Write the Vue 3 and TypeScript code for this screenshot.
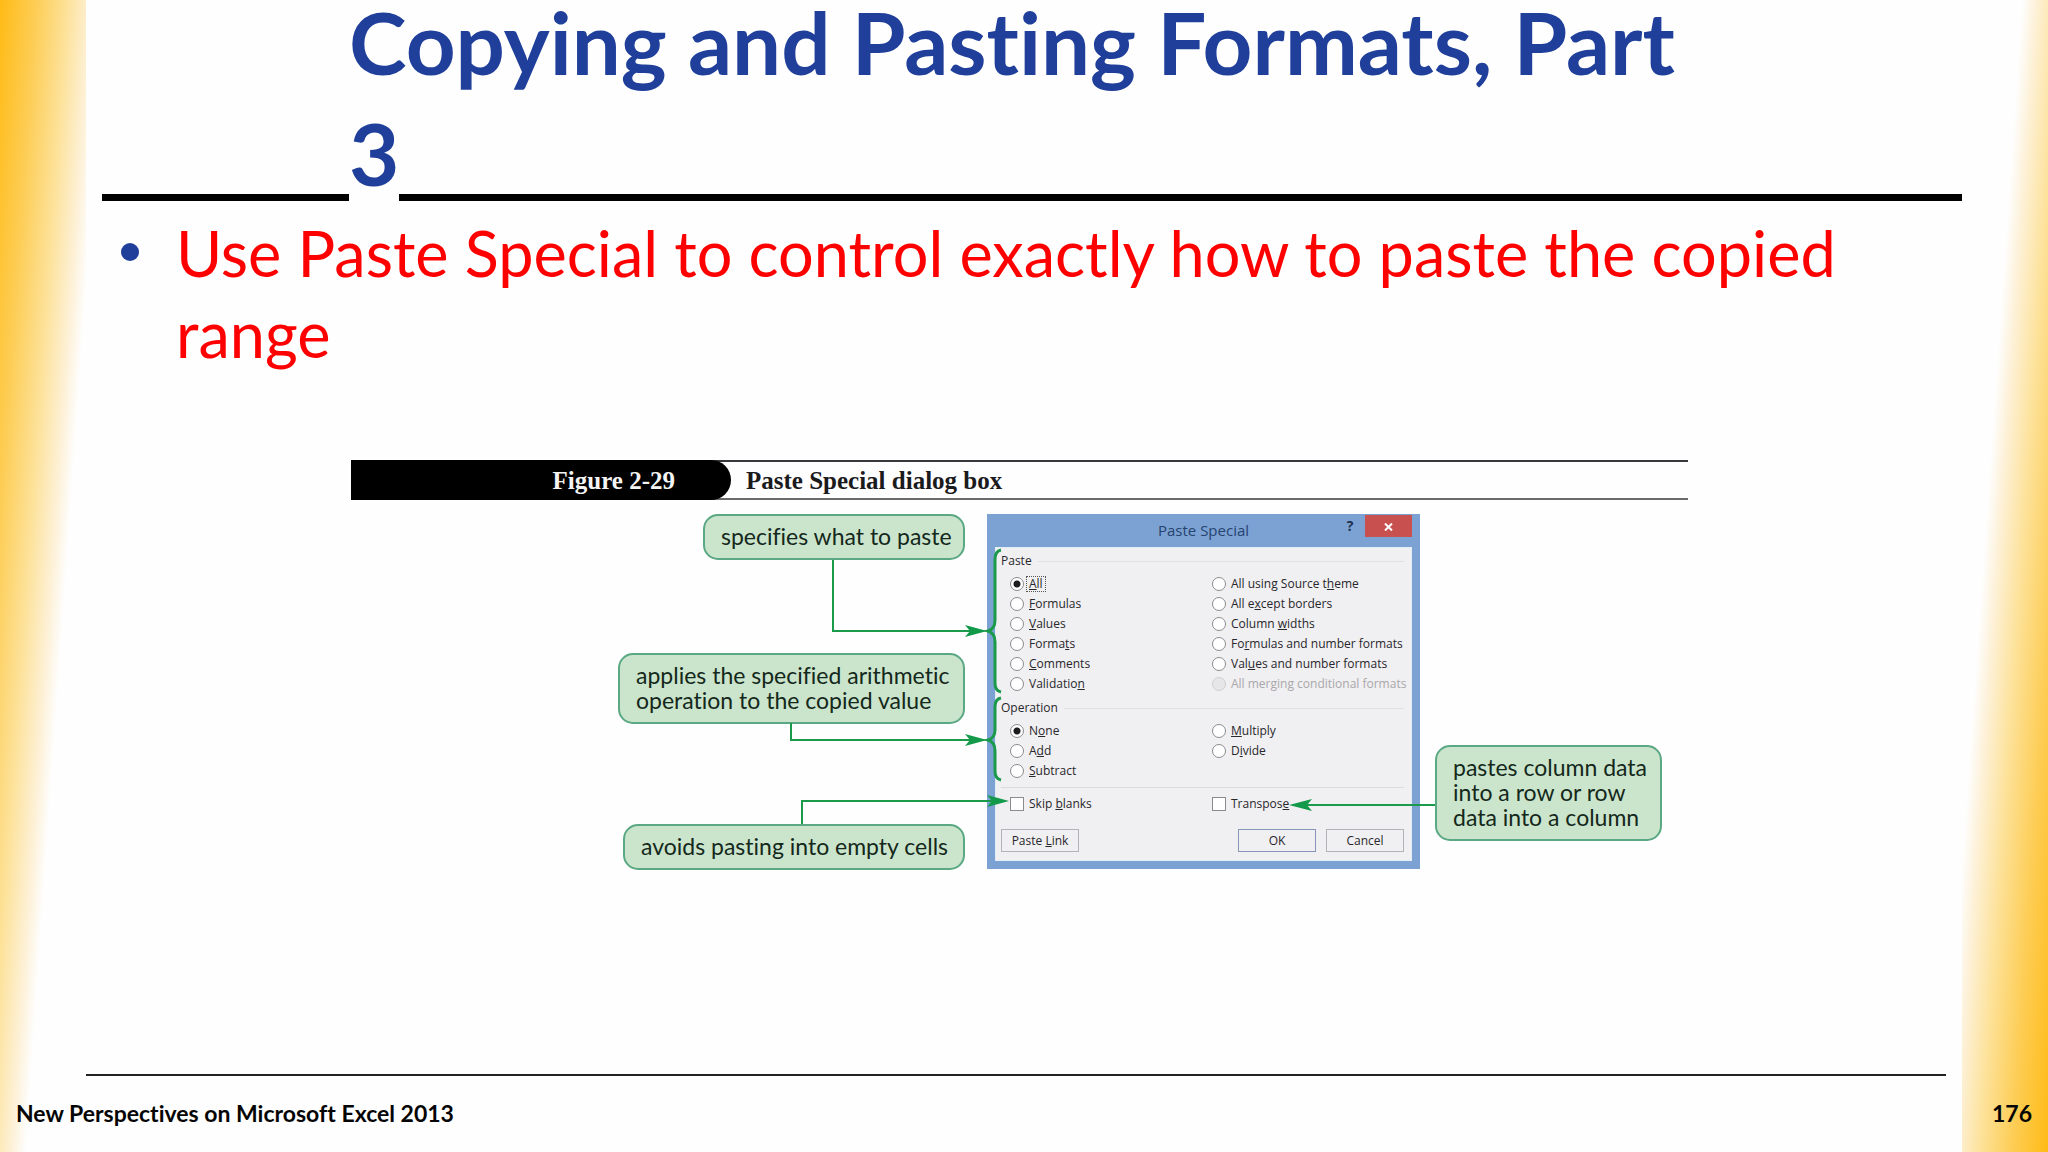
<script setup lang="ts">
import { ref } from 'vue'

interface Option {
  id: string
  before: string
  key: string
  after: string
  disabled?: boolean
}

const pasteOptions: Option[] = [
  { id: 'all', before: '', key: 'A', after: 'll' },
  { id: 'formulas', before: '', key: 'F', after: 'ormulas' },
  { id: 'values', before: '', key: 'V', after: 'alues' },
  { id: 'formats', before: 'Forma', key: 't', after: 's' },
  { id: 'comments', before: '', key: 'C', after: 'omments' },
  { id: 'validation', before: 'Validatio', key: 'n', after: '' },
  { id: 'theme', before: 'All using Source t', key: 'h', after: 'eme' },
  { id: 'borders', before: 'All e', key: 'x', after: 'cept borders' },
  { id: 'widths', before: 'Column ', key: 'w', after: 'idths' },
  { id: 'formulas-numbers', before: 'Fo', key: 'r', after: 'mulas and number formats' },
  { id: 'values-numbers', before: 'Val', key: 'u', after: 'es and number formats' },
  { id: 'merging', before: 'All mer', key: 'g', after: 'ing conditional formats', disabled: true },
]

const operationOptions: Option[] = [
  { id: 'none', before: 'N', key: 'o', after: 'ne' },
  { id: 'add', before: 'A', key: 'd', after: 'd' },
  { id: 'subtract', before: '', key: 'S', after: 'ubtract' },
  { id: 'multiply', before: '', key: 'M', after: 'ultiply' },
  { id: 'divide', before: 'D', key: 'i', after: 'vide' },
]

const toggles: Option[] = [
  { id: 'skip', before: 'Skip ', key: 'b', after: 'lanks' },
  { id: 'transpose', before: 'Transpos', key: 'e', after: '' },
]

const paste = ref('all')
const operation = ref('none')
const checked = ref<string[]>([])
</script>

<template>
  <main class="slide">
    <header class="head">
      <h1><span>Copying and Pasting Formats, Part 3</span></h1>
    </header>

    <ul class="points">
      <li>Use Paste Special to control exactly how to paste the copied range</li>
    </ul>

    <figure class="figure">
      <figcaption class="caption">
        <span class="number">Figure 2-29</span>
        <span class="name">Paste Special dialog box</span>
      </figcaption>

      <div class="diagram">
        <div class="notes">
          <p class="note note-paste">specifies what to paste</p>
          <p class="note note-operation">applies the specified arithmetic<br />operation to the copied value</p>
          <p class="note note-blanks">avoids pasting into empty cells</p>
        </div>

        <form class="dialog" @submit.prevent>
          <div class="titlebar">
            <h2>Paste Special</h2>
            <button type="button" class="help" aria-label="Help">?</button>
            <button type="button" class="close" aria-label="Close">
              <svg width="9" height="8" viewBox="0 0 9 8">
                <path d="M1 0.5 8 7.5M8 0.5 1 7.5" stroke="#fff" stroke-width="2" fill="none" />
              </svg>
            </button>
          </div>

          <div class="panel">
            <fieldset>
              <legend>Paste</legend>
              <div class="options six">
                <label v-for="o in pasteOptions" :key="o.id" :class="{ off: o.disabled }">
                  <input v-model="paste" type="radio" name="paste" :value="o.id" :disabled="o.disabled" />
                  <span :class="{ focused: paste === o.id }">{{ o.before }}<u>{{ o.key }}</u>{{ o.after }}</span>
                </label>
              </div>
            </fieldset>

            <fieldset class="second">
              <legend>Operation</legend>
              <div class="options three">
                <label v-for="o in operationOptions" :key="o.id">
                  <input v-model="operation" type="radio" name="operation" :value="o.id" />
                  <span>{{ o.before }}<u>{{ o.key }}</u>{{ o.after }}</span>
                </label>
              </div>
            </fieldset>

            <div class="options one">
              <label v-for="o in toggles" :key="o.id">
                <input v-model="checked" type="checkbox" :value="o.id" />
                <span>{{ o.before }}<u>{{ o.key }}</u>{{ o.after }}</span>
              </label>
            </div>

            <div class="actions">
              <button type="button" class="link">Paste <u>L</u>ink</button>
              <button type="submit" class="ok">OK</button>
              <button type="button">Cancel</button>
            </div>
          </div>
        </form>

        <p class="note note-transpose">pastes column data<br />into a row or row<br />data into a column</p>

        <svg class="connectors" width="1337" height="380" viewBox="0 0 1337 380" aria-hidden="true">
          <g fill="none" stroke="#1c9a4c" stroke-width="2">
            <path d="M482 60V131H622" />
            <path d="M440 223V240H622" />
            <path d="M451 324V301H642" />
            <path d="M1084 305H956" />
          </g>
          <g fill="#12994a">
            <path d="M614 125 636 131 614 137 619 131Z" />
            <path d="M614 234 636 240 614 246 619 240Z" />
            <path d="M636 295 658 301 636 307 641 301Z" />
            <path d="M961 299 938 305 961 311 956 305Z" />
          </g>
          <g fill="none" stroke="#1c9a4c" stroke-width="3">
            <path d="M650 50Q644 51 644 60V120Q644 129 637 131Q644 133 644 142V183Q644 191 650 192" />
            <path d="M650 198Q644 199 644 207V230Q644 238 637 240Q644 242 644 251V271Q644 279 650 280" />
          </g>
        </svg>
      </div>
    </figure>

    <footer class="foot">
      <span>New Perspectives on Microsoft Excel 2013</span>
      <span>176</span>
    </footer>
  </main>
</template>

<style>
body {
  margin: 0;
}
</style>

<style scoped>
.slide {
  box-sizing: border-box;
  display: flex;
  flex-direction: column;
  min-height: 100vh;
  font-family: Lato, "Open Sans", sans-serif;
  font-variant-ligatures: none;
  background:
    linear-gradient(94deg, #ffbb16 0, #fdcd55 36px, #fde29b 68px, #fdf1d8 92px, #fefefe 106px) left / 86px 100% no-repeat,
    linear-gradient(274deg, #ffbb16 0, #fdcd55 36px, #fde29b 68px, #fdf1d8 92px, #fefefe 106px) right / 86px 100% no-repeat,
    #fefefe;
}

.head {
  margin: 0 86px 0 102px;
  border-bottom: 7px solid #000;
  display: flow-root;
}

h1 {
  margin: -14px 0;
  padding: 0 274px 0 247px;
  font-size: 87px;
  line-height: 111px;
  font-weight: 700;
  color: #1f3f9b;
}

h1 span {
  background: #fefefe;
}

.points {
  margin: 11px 180px 0 176px;
  padding: 0;
  list-style: none;
  font-size: 63px;
  line-height: 81px;
  color: #fe0000;
}

.points li::before {
  content: "";
  float: left;
  width: 18px;
  height: 18px;
  margin: 31px 0 0 -55px;
  border-radius: 50%;
  background: #1f3f9b;
}

.figure {
  margin: 86px 360px 0 351px;
}

.caption {
  box-sizing: border-box;
  display: flex;
  height: 40px;
  border-top: 2px solid #3a373c;
  border-bottom: 2px solid #6b696c;
  font: 700 25px/37px "Liberation Serif", serif;
  color: #1b1a1c;
}

.number {
  box-sizing: border-box;
  width: 380px;
  margin: -2px 15px -2px 0;
  padding: 2px 56px 0 0;
  border-radius: 0 20px 20px 0;
  background: #000;
  color: #f4f4f4;
  text-align: right;
}

.diagram {
  position: relative;
  display: flex;
  align-items: flex-start;
  padding-top: 14px;
}

.notes {
  display: flex;
  flex-direction: column;
  align-items: flex-end;
  width: 614px;
  margin-right: 22px;
}

.note {
  box-sizing: border-box;
  flex: none;
  margin: 0;
  padding: 8px 16px 9px;
  border: 2px solid #5ba884;
  border-radius: 15px;
  background: #cbe5cc;
  color: #14281b;
  font-size: 23px;
  line-height: 25px;
  white-space: nowrap;
}

.note-paste {
  width: 262px;
}

.note-operation {
  width: 347px;
  margin-top: 93px;
}

.note-blanks {
  width: 342px;
  margin-top: 100px;
}

.note-transpose {
  width: 227px;
  margin: 231px 0 0 15px;
}

.dialog {
  box-sizing: border-box;
  flex: none;
  width: 433px;
  padding: 0 8px 8px;
  background: #7ba2d3;
  font-family: "Open Sans", "Noto Sans", sans-serif;
  font-size: 12px;
  line-height: 20px;
  color: #28272c;
}

.titlebar {
  display: grid;
  grid-template-columns: 1fr auto 1fr;
  height: 33px;
}

h2 {
  grid-area: 1 / 2;
  margin: 0;
  font-size: 15px;
  line-height: 32px;
  font-weight: 400;
  color: #27436f;
}

.help,
.close {
  grid-area: 1 / 3;
  justify-self: end;
  height: 22px;
  margin: 1px 0 0;
  padding: 0;
  border: 0;
}

.help {
  width: 20px;
  margin-right: 52px;
  background: none;
  font: 700 14px/22px "Open Sans", sans-serif;
  color: #1e3050;
}

.close {
  width: 47px;
  background: #c8504f;
}

.panel {
  padding: 4px 8px 9px 6px;
  background: #f0eff1;
  box-shadow: inset 0 0 0 1px #e3edf8;
}

fieldset {
  min-width: 0;
  margin: 0;
  padding: 0;
  border: 0;
}

.second {
  margin-top: 4px;
  padding-bottom: 6px;
  border-bottom: 1px solid #dcdbde;
}

legend {
  display: flex;
  align-items: center;
  gap: 6px;
  width: 100%;
  padding: 0;
}

legend::after {
  content: "";
  flex: 1;
  height: 1px;
  background: #e0dfe2;
}

.options {
  display: grid;
  grid-auto-flow: column;
  grid-template-columns: 202px 1fr;
  padding: 3px 0 0 9px;
}

.six {
  grid-template-rows: repeat(6, 20px);
}

.three {
  grid-template-rows: repeat(3, 20px);
}

.one {
  grid-template-rows: 20px;
  padding-top: 6px;
}

label {
  display: flex;
  align-items: center;
  gap: 5px;
  white-space: nowrap;
}

.off {
  color: #a9a8ab;
}

.focused {
  margin-left: -2px;
  padding: 0 2px;
  line-height: 14px;
  outline: 1px dotted #555;
}

label input {
  appearance: none;
  box-sizing: border-box;
  flex: none;
  width: 14px;
  height: 14px;
  margin: 0;
  border: 1px solid #8b8a8e;
  background: #fff;
}

label input[type="radio"] {
  border-radius: 50%;
}

label input[type="radio"]:checked {
  background: radial-gradient(circle, #1c1b1e 3px, #fff 4px);
}

label input:disabled {
  border-color: #cfced1;
  background: #e6e5e8;
}

.actions {
  display: flex;
  gap: 10px;
  margin-top: 15px;
}

.actions button {
  box-sizing: border-box;
  width: 78px;
  height: 23px;
  padding: 0;
  border: 1px solid #b4b3b8;
  background: #f0eff2;
  font: inherit;
  line-height: 20px;
  color: inherit;
}

.actions .link {
  margin-right: auto;
}

.actions .ok {
  border-color: #8795b8;
}

.connectors {
  position: absolute;
  top: 0;
  left: 0;
  pointer-events: none;
}

.foot {
  display: flex;
  justify-content: space-between;
  margin-top: auto;
  padding: 25px 16px 24px;
  font-size: 23px;
  line-height: 29px;
  font-weight: 700;
  color: #050505;
}

.foot::before {
  content: "";
  position: absolute;
  right: 102px;
  left: 86px;
  height: 2px;
  margin-top: -25px;
  background: #222;
}
</style>
